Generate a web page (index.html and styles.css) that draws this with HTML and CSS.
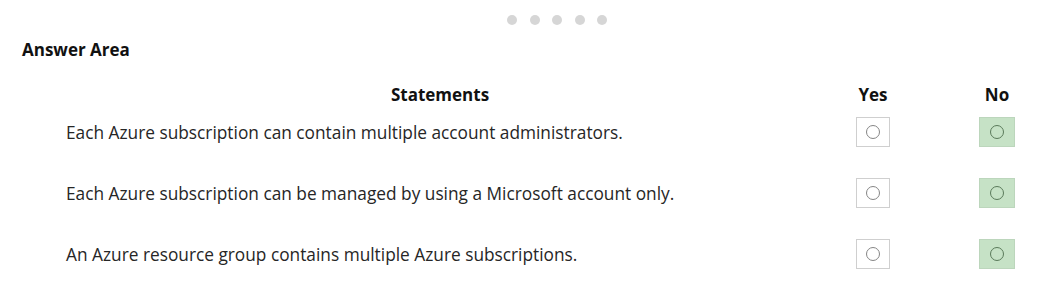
FILE: index.html
```html
<!DOCTYPE html>
<html>
<head>
<meta charset="utf-8">
<link rel="stylesheet" href="styles.css">
</head>
<body>
<div class="page">
  <div class="dots"><span></span><span></span><span></span><span></span><span></span></div>
  <h2 class="title">Answer Area</h2>
  <div class="grid head">
    <div class="hd hd-st">Statements</div>
    <div class="hd c-yes">Yes</div>
    <div class="hd c-no">No</div>
  </div>
  <div class="grid rows">
    <div class="st">Each Azure subscription can contain multiple account administrators.</div>
    <div class="cell c-yes"><span class="box"><span class="ring"></span></span></div>
    <div class="cell c-no"><span class="box sel"><span class="ring"></span></span></div>

    <div class="st">Each Azure subscription can be managed by using a Microsoft account only.</div>
    <div class="cell c-yes"><span class="box"><span class="ring"></span></span></div>
    <div class="cell c-no"><span class="box sel"><span class="ring"></span></span></div>

    <div class="st">An Azure resource group contains multiple Azure subscriptions.</div>
    <div class="cell c-yes"><span class="box"><span class="ring"></span></span></div>
    <div class="cell c-no"><span class="box sel"><span class="ring"></span></span></div>
  </div>
</div>
</body>
</html>
```
FILE: styles.css
```css
html, body {
  margin: 0;
  padding: 0;
  background: #fff;
  overflow: hidden;
}
.page {
  width: 1038px;
  height: 298px;
  font-family: "Open Sans", "Noto Sans", sans-serif;
  color: #222;
}
.dots {
  display: flex;
  gap: 12.5px;
  padding-top: 15px;
  margin-left: 507px;
}
.dots span {
  width: 10px;
  height: 10px;
  border-radius: 50%;
  background: #d6d6d6;
}
.title {
  margin: 14px 0 0 22px;
  font-size: 17px;
  font-weight: 700;
  line-height: 22px;
  color: #111;
}
.grid {
  display: grid;
  grid-template-columns: 830px 42px 82px 42px;
  margin-left: 22px;
  align-items: center;
}
.head {
  margin-top: 22px;
}
.rows {
  margin-top: 11px;
  grid-auto-rows: 30px;
  row-gap: 31px;
}
.hd {
  font-size: 17px;
  font-weight: 700;
  color: #111;
  text-align: center;
  line-height: 23px;
}
.hd-st { padding-left: 6px; }
.c-yes { grid-column: 2; }
.c-no { grid-column: 4; }
.st {
  grid-column: 1;
  padding-left: 44px;
  font-size: 17.3px;
  color: #262626;
}
.cell {
  display: flex;
  justify-content: center;
}
.box {
  width: 32px;
  height: 28px;
  border: 1px solid #cfcfcf;
  display: flex;
  align-items: center;
  justify-content: center;
}
.box.sel {
  background: #c6e2c6;
  border-color: #bcd6bc;
  width: 34px;
}
.ring {
  width: 12px;
  height: 12px;
  border: 1.8px solid #858585;
  border-radius: 50%;
}
.box.sel .ring {
  border-color: #5a7a5a;
}
```
